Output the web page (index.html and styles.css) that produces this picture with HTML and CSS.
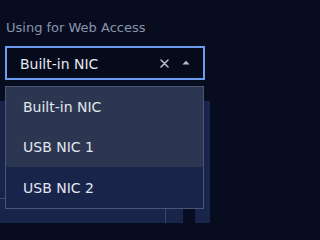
FILE: index.html
```html
<!DOCTYPE html>
<html lang="en">
<head>
<meta charset="utf-8">
<title>Web Access NIC</title>
<link rel="stylesheet" href="styles.css">
</head>
<body>
<div class="field">
  <label class="label">Using for Web Access</label>
  <div class="select">
    <span class="value">Built-in NIC</span>
    <span class="actions">
      <svg class="clear" width="9" height="9" viewBox="0 0 9 9"><path d="M1 1 L8 8 M8 1 L1 8" stroke="#b4bdd2" stroke-width="1.5" fill="none" stroke-linecap="round"/></svg>
      <svg class="caret" width="8" height="5" viewBox="0 0 8 5"><path d="M0.5 4.5 L4 0.8 L7.5 4.5 Z" fill="#b4bdd2"/></svg>
    </span>
    <ul class="menu">
      <li class="option">Built-in NIC</li>
      <li class="option">USB NIC 1</li>
      <li class="option hover">USB NIC 2</li>
    </ul>
  </div>
</div>
<div class="panel">
  <div class="panel-head"></div>
  <div class="panel-row">
    <div class="cell wide"></div>
    <div class="cell narrow"></div>
    <div class="cell dark"></div>
    <div class="cell"></div>
  </div>
</div>
</body>
</html>
```

FILE: styles.css
```css
html, body {
  margin: 0;
  padding: 0;
}
body {
  background: #070d1f;
  font-family: "DejaVu Sans", "Noto Sans", sans-serif;
  width: 210px;
  height: 223px;
  overflow: hidden;
}
.field {
  padding: 20px 5px 0 5px;
  display: flex;
  flex-direction: column;
}
.label {
  display: block;
  font-size: 13px;
  line-height: 16px;
  color: #8994ad;
  padding-left: 1px;
  margin-bottom: 10px;
}
.select {
  position: relative;
  box-sizing: border-box;
  width: 200px;
  height: 34px;
  border: 2px solid #6e9bf0;
  background: #060b1c;
  display: flex;
  align-items: center;
  padding: 0 13px;
}
.value {
  flex: 1;
  font-size: 14px;
  line-height: 16px;
  color: #e4e8f0;
  padding-top: 1px;
}
.actions {
  display: flex;
  align-items: center;
  gap: 13px;
}
.clear {
  display: block;
  margin-top: 0px;
}
.caret {
  display: block;
  margin-bottom: 1px;
}
.menu {
  position: absolute;
  top: 38px;
  left: -2px;
  width: 199px;
  box-sizing: border-box;
  margin: 0;
  padding: 0;
  list-style: none;
  background: #2d3651;
  border: 1px solid #4a5576;
  z-index: 2;
}
.option {
  height: 40px;
  display: flex;
  align-items: center;
  padding-left: 17px;
  font-size: 14px;
  line-height: 16px;
  color: #e2e6ef;
}
.option.hover {
  background: #19244a;
  height: 41px;
}
.panel {
  margin-top: 21px;
  background: #18244a;
  height: 122px;
  display: flex;
  flex-direction: column;
}
.panel-head {
  height: 97px;
  border-bottom: 1px solid #3a4670;
  width: 190px;
}
.panel-row {
  display: flex;
  flex: 1;
  margin-top: 10px;
}
.cell.wide {
  width: 165px;
}
.cell.narrow {
  width: 17px;
  border-left: 1px solid #3a4670;
}
.cell.dark {
  width: 12px;
  background: #070d1f;
}
.cell {
  flex: none;
}
```
